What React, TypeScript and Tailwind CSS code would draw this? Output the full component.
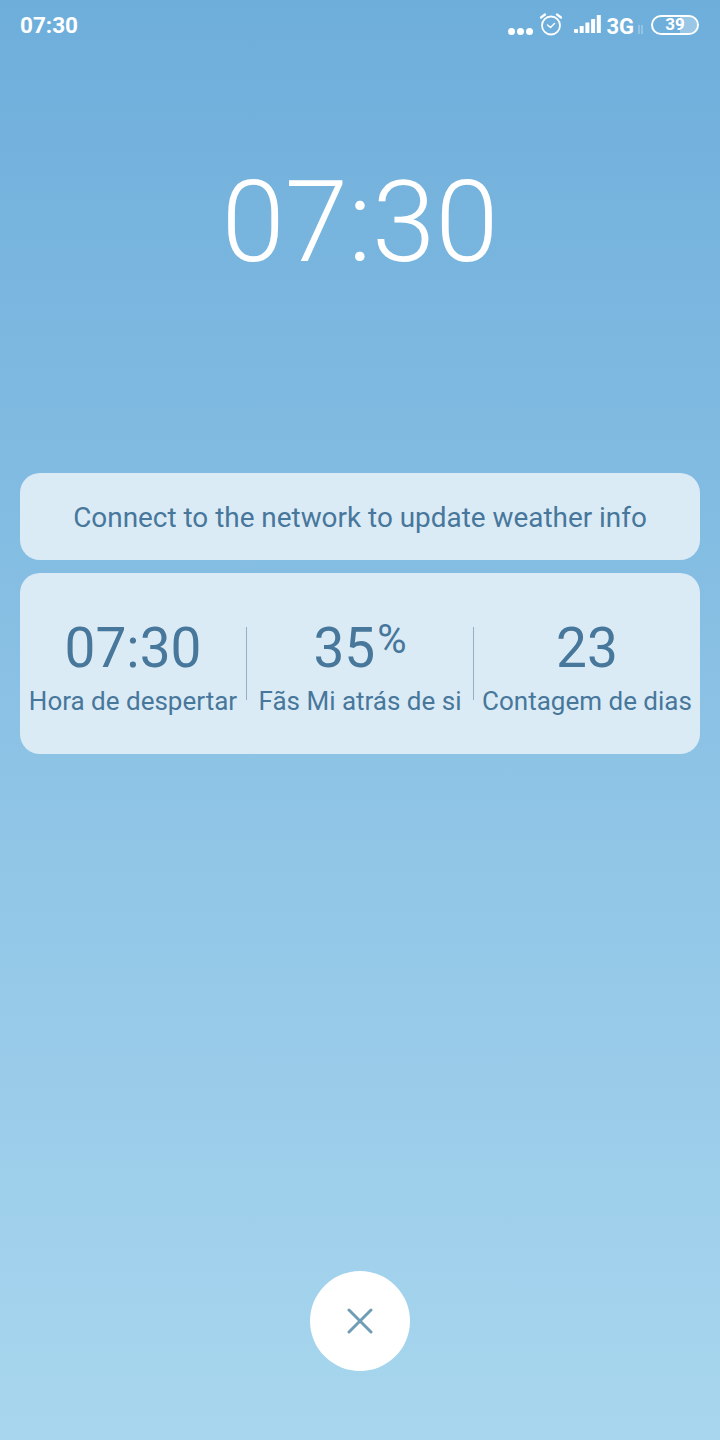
const stats = [
  { value: "07:30", label: "Hora de despertar" },
  { value: "35", unit: "%", label: "Fãs Mi atrás de si" },
  { value: "23", label: "Contagem de dias" },
];

function AlarmIcon() {
  return (
    <svg width="26" height="26" viewBox="0 0 26 26" fill="none" stroke="white" strokeLinecap="round" strokeLinejoin="round">
      <circle cx="13" cy="14.5" r="9" strokeWidth="1.8" />
      <path d="M9.5 14l3 2.5 4-4" strokeWidth="1.5" />
      <path d="M3 6.5l4-3M23 6.5l-4-3" strokeWidth="2.2" />
    </svg>
  );
}

function SignalIcon() {
  return (
    <svg width="27" height="18" viewBox="0 0 27 18" fill="white">
      <rect x="0" y="14" width="4" height="4" rx="1" />
      <rect x="5.7" y="11" width="4" height="7" rx="0.5" />
      <rect x="11.4" y="7.5" width="4" height="10.5" rx="0.5" />
      <rect x="17.1" y="4" width="4" height="14" rx="0.5" />
      <rect x="22.8" y="0" width="4" height="18" rx="0.5" />
    </svg>
  );
}

function StatusBar() {
  return (
    <div className="flex h-[52px] items-center justify-between pl-5 pr-[21px] text-white">
      <span className="text-[22.5px] font-bold">07:30</span>
      <div className="flex items-center">
        <div className="mt-[10px] flex gap-[2px]">
          <span className="size-[7px] rounded-full bg-white" />
          <span className="size-[7px] rounded-full bg-white" />
          <span className="size-[7px] rounded-full bg-white" />
        </div>
        <div className="ml-[5px] -mt-[4px]">
          <AlarmIcon />
        </div>
        <div className="ml-[10px] -mt-[4px]">
          <SignalIcon />
        </div>
        <span className="ml-[5px] text-[22px] font-bold">3G</span>
        <svg width="9" height="10" viewBox="0 0 9 10" fill="none" stroke="white" strokeOpacity="0.5" className="mt-2 ml-[2px]">
          <path d="M3 0v9M6 0v9" />
        </svg>
        <div className="relative ml-[6px] -mt-[3px] flex h-[20px] w-[48px] items-center justify-center overflow-hidden rounded-full border-2 border-white">
          <div className="absolute inset-y-0 right-0 w-[39%] bg-white/30" />
          <span className="relative text-[17px] leading-none font-bold">39</span>
        </div>
      </div>
    </div>
  );
}

export default function App() {
  return (
    <div className="flex h-[1440px] w-[720px] flex-col overflow-hidden bg-gradient-to-b from-[#6eaedb] to-[#a8d6ee] font-['Roboto',sans-serif]">
      <StatusBar />

      <div className="mt-[102px] text-center text-[114px] leading-[136px] font-light text-white">07:30</div>

      <div className="mx-5 mt-[183px] flex h-[87px] items-center justify-center rounded-[20px] bg-[#dbebf6] pt-[2px] text-[27.9px] text-[#47779b]">
        Connect to the network to update weather info
      </div>

      <div className="mx-5 mt-[13px] flex h-[181px] items-center rounded-[20px] bg-[#dbebf6] text-[#47779b]">
        {stats.map((stat, i) => (
          <div key={stat.label} className="flex items-stretch">
            {i > 0 && <div className="my-auto h-[73px] w-px bg-[#47779b]/50" />}
            <div className="flex w-[226px] flex-col items-center pt-[4px]">
              <div className="text-[55px] leading-[64px]">
                {stat.value}
                {stat.unit && <sup className="ml-[2px] align-baseline relative -top-[14px] text-[40px] leading-none">{stat.unit}</sup>}
              </div>
              <div className="mt-[6px] text-[26px] leading-[30px] whitespace-nowrap">{stat.label}</div>
            </div>
          </div>
        ))}
      </div>

      <div className="mt-auto mb-[69px] flex justify-center">
        <button className="flex size-[100px] items-center justify-center rounded-full bg-white">
          <svg width="26" height="26" viewBox="0 0 26 26" fill="none" stroke="#6f9db5" strokeWidth="3" strokeLinecap="round">
            <path d="M2 2l22 22M24 2L2 24" />
          </svg>
        </button>
      </div>
    </div>
  );
}
